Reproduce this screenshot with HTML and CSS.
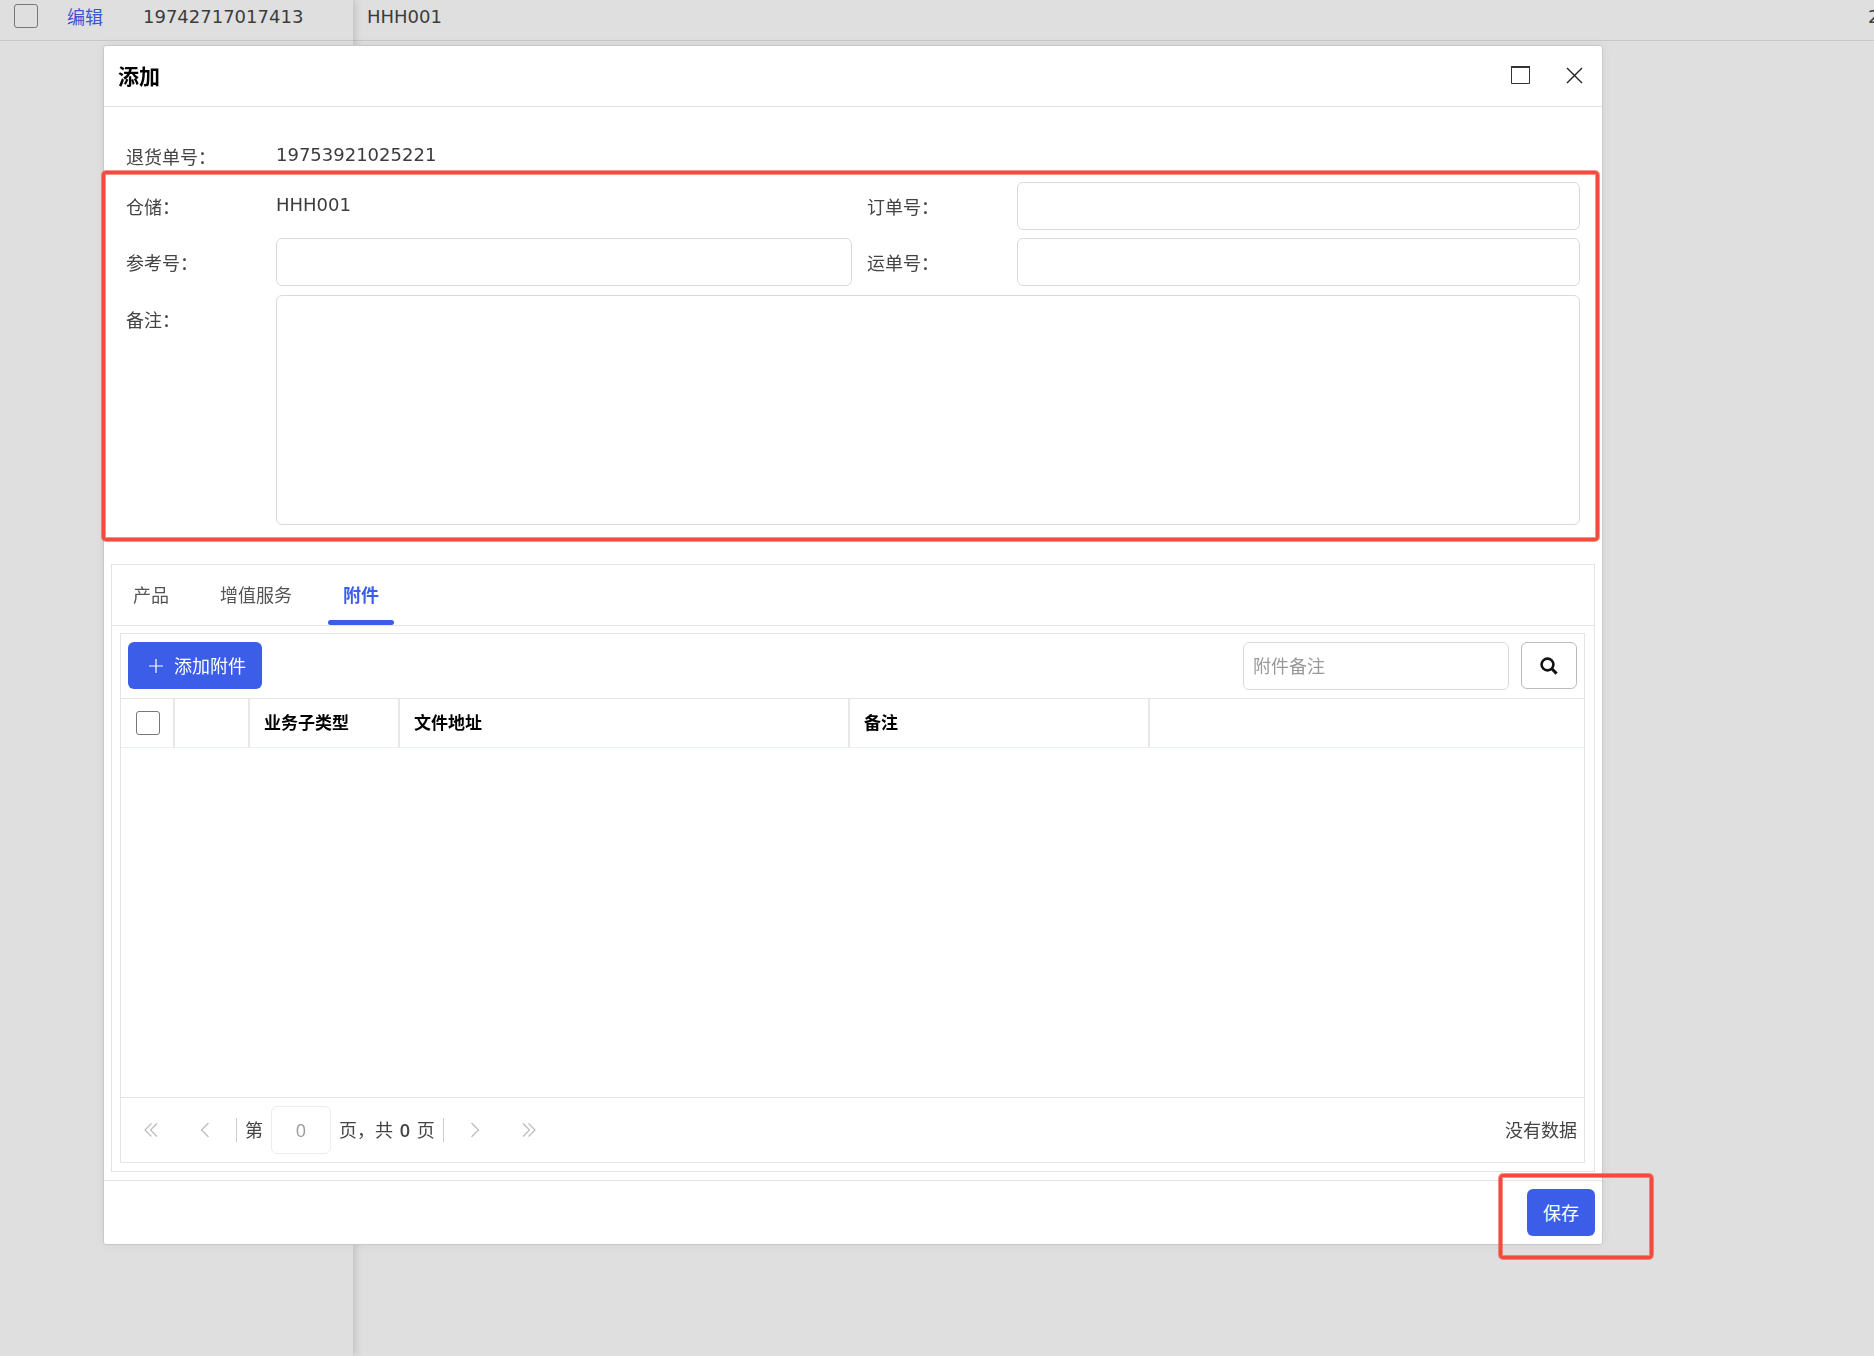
FILE: index.html
```html
<!DOCTYPE html>
<html lang="zh-CN">
<head>
<meta charset="utf-8">
<meta name="viewport" content="width=device-width, initial-scale=1">
<title>添加</title>
<link rel="stylesheet" href="styles.css">
</head>
<body>
<div class="page">
  <div class="pane pane-frozen">
    <div class="list-row">
      <input class="check" type="checkbox" aria-label="选择行">
      <a class="edit-link" href="#">编辑</a>
      <span class="code">19742717017413</span>
    </div>
  </div>
  <div class="pane pane-scroll">
    <div class="list-row">
      <span class="code cell-storage">HHH001</span>
      <span class="code cell-date">2</span>
    </div>
  </div>
</div>

<div class="overlay">
  <section class="dialog" role="dialog" aria-labelledby="dialog-title">
    <header class="dialog-head">
      <h1 class="dialog-title" id="dialog-title">添加</h1>
      <div class="dialog-tools">
        <button class="icon-btn" type="button" aria-label="最大化">
          <svg width="19" height="18" viewBox="0 0 19 18" fill="none" stroke="#333"><path d="M0 1H19" stroke-width="2"/><path d="M0.500 1V17.500H18.500V1" stroke-width="1"/></svg>
        </button>
        <button class="icon-btn" type="button" aria-label="关闭">
          <svg width="17" height="17" viewBox="0 0 17 17" fill="none" stroke="#222" stroke-width="1.4"><path d="M1 1L16 16M16 1L1 16"/></svg>
        </button>
      </div>
    </header>

    <div class="dialog-body">
      <form class="form">
        <div class="form-row form-row-first">
          <span class="label">退货单号：</span>
          <span class="code value">19753921025221</span>
        </div>
        <div class="form-marked">
          <span class="label">仓储：</span>
          <span class="code value">HHH001</span>
          <label class="label label-second" for="order-no">订单号：</label>
          <input class="field" id="order-no" type="text">
          <label class="label" for="ref-no">参考号：</label>
          <input class="field" id="ref-no" type="text">
          <label class="label label-second" for="track-no">运单号：</label>
          <input class="field" id="track-no" type="text">
          <label class="label label-top" for="remark">备注：</label>
          <textarea class="field field-area" id="remark"></textarea>
          <div class="mark mark-form"></div>
        </div>
      </form>

      <div class="tabs">
        <div class="tab-bar" role="tablist">
          <button class="tab" type="button" role="tab">产品</button>
          <button class="tab" type="button" role="tab">增值服务</button>
          <button class="tab tab-active" type="button" role="tab" aria-selected="true">附件</button>
        </div>
        <div class="grid">
          <div class="toolbar">
            <button class="btn btn-add" type="button">
              <svg width="14" height="14" viewBox="0 0 14 14" stroke="#fff" stroke-width="1.2"><path d="M7 0V14M0 7H14"/></svg>
              添加附件
            </button>
            <div class="search">
              <input class="field search-field" type="text" placeholder="附件备注" aria-label="附件备注">
              <button class="search-btn" type="button" aria-label="搜索">
                <svg width="18" height="18" viewBox="0 0 18 18" fill="none" stroke="#111"><circle cx="7.5" cy="7.5" r="5.9" stroke-width="2.6"/><path d="M11.8 11.8L16.6 16.6" stroke-width="3"/></svg>
              </button>
            </div>
          </div>
          <div class="grid-body">
            <table class="table">
              <colgroup><col class="c-check"><col class="c-tool"><col class="c-type"><col class="c-file"><col class="c-remark"><col></colgroup>
              <thead>
                <tr>
                  <th class="th-check"><input class="check" type="checkbox" aria-label="全选"></th>
                  <th></th>
                  <th>业务子类型</th>
                  <th>文件地址</th>
                  <th>备注</th>
                  <th></th>
                </tr>
              </thead>
            </table>
          </div>
          <div class="pager">
            <div class="pager-nav">
              <button class="page-btn" type="button" aria-label="首页"><svg width="14" height="16" viewBox="0 0 14 16"><path d="M7.500 1.500L1 8L7.500 14.500M13 1.500L6.500 8L13 14.500"/></svg></button>
              <button class="page-btn" type="button" aria-label="上一页"><svg width="14" height="16" viewBox="0 0 14 16"><path d="M10.500 1L3.500 8L10.500 15"/></svg></button>
              <span class="sep"></span>
              <label for="page-no">第</label>
              <input class="field page-field" id="page-no" type="text" value="0">
              <span>页，共 <span class="total">0</span> 页</span>
              <span class="sep"></span>
              <button class="page-btn" type="button" aria-label="下一页"><svg width="14" height="16" viewBox="0 0 14 16"><path d="M3.500 1L10.500 8L3.500 15"/></svg></button>
              <button class="page-btn" type="button" aria-label="末页"><svg width="14" height="16" viewBox="0 0 14 16"><path d="M1 1.500L7.500 8L1 14.500M6.500 1.500L13 8L6.500 14.500"/></svg></button>
            </div>
            <span>没有数据</span>
          </div>
        </div>
      </div>
    </div>

    <footer class="dialog-foot">
      <button class="btn" type="button">保存</button>
      <div class="mark mark-save"></div>
    </footer>
  </section>
</div>
</body>
</html>
```

FILE: styles.css
```css
* { box-sizing: border-box; }

body {
  margin: 0;
  height: 100vh;
  overflow: hidden;
  background: #dfdfdf;
  color: #444;
  font: 18px/24px "Open Sans", "Noto Sans CJK SC", sans-serif;
}

button, input, textarea { font: inherit; margin: 0; }
button { padding: 0; border: 0; background: none; color: inherit; cursor: pointer; }
svg { display: block; flex: none; }

.code {
  font-family: "DejaVu Sans", sans-serif;
  color: #3c3c3c;
}

.check {
  appearance: none;
  display: block;
  width: 24px;
  height: 24px;
  border: 1px solid #777;
  border-radius: 3px;
}

/* Order list behind the dialog */
.page { display: flex; height: 100%; }
.pane-frozen {
  width: 353px;
  flex: none;
  z-index: 1;
  box-shadow: 2px 0 8px rgba(0, 0, 0, 0.15);
  background: #dfdfdf;
}
.pane-scroll { flex: 1; min-width: 0; }
.list-row {
  display: flex;
  align-items: center;
  height: 41px;
  padding: 0 0 6px 14px;
  border-bottom: 1px solid #c8c8c8;
}
.list-row .check { margin-bottom: 2px; }
.edit-link {
  width: 76px;
  margin-left: 29px;
  color: #3a56d0;
  text-decoration: none;
}
.cell-storage { flex: 1; }
.cell-date { width: 6px; white-space: nowrap; }

/* Dialog */
.overlay {
  position: fixed;
  inset: 0;
  z-index: 2;
  display: flex;
  padding: 45px 271px 111px 103px;
}
.dialog {
  flex: 1;
  min-width: 0;
  display: flex;
  flex-direction: column;
  background: #fff;
  border: 1px solid #c8c8c8;
  border-radius: 3px;
  box-shadow: 0 0 12px rgba(0, 0, 0, 0.05);
}
.dialog-head {
  display: flex;
  justify-content: space-between;
  align-items: center;
  height: 61px;
  padding: 0 19px 0 14px;
  border-bottom: 1px solid #e2e2e2;
}
.dialog-title { margin: 0; font-size: 21px; line-height: 30px; color: #000; }
.dialog-tools { display: flex; gap: 36px; padding-bottom: 2px; }
.icon-btn { display: flex; align-items: center; height: 20px; }

.dialog-body {
  flex: 1;
  min-height: 0;
  display: flex;
  flex-direction: column;
  padding: 29px 7px 8px;
}

/* Form */
.form { padding: 0 15px; }
.form-row, .form-marked {
  display: grid;
  grid-template-columns: 150px 576fr 165px 563fr;
  row-gap: 8px;
}
.form-row-first { height: 40px; margin-bottom: 6px; align-items: center; }
.form-marked { position: relative; grid-template-rows: 48px 48px 231px; align-items: center; }
.label { padding-top: 2px; }
.value { padding-bottom: 2px; }
.label-second { padding-left: 15px; }
.label-top { align-self: start; padding-top: 14px; }
.field {
  width: 100%;
  height: 48px;
  padding: 0 9px;
  border: 1px solid #dadada;
  border-radius: 6px;
  background: #fff;
  color: #444;
  outline: 0;
}
.field-area { display: block; grid-column: 2 / -1; height: 230px; align-self: end; resize: none; }

/* Tabs */
.tabs {
  flex: 1;
  min-height: 0;
  display: flex;
  flex-direction: column;
  margin-top: 39px;
  border: 1px solid #e4e4e4;
}
.tab-bar {
  display: flex;
  gap: 21px;
  height: 61px;
  padding-left: 6px;
  border-bottom: 1px solid #e4e4e4;
}
.tab { padding: 5px 15px 0; border-bottom: 5px solid transparent; color: #555; }
.tab-active {
  position: relative;
  color: #3c5de8;
  font-weight: 700;
}
.tab-active::after {
  content: "";
  position: absolute;
  left: 0;
  right: 0;
  bottom: -5px;
  height: 5px;
  border-radius: 3px;
  background: #3c5de8;
}

/* Attachment grid */
.grid {
  flex: 1;
  min-height: 0;
  display: flex;
  flex-direction: column;
  margin: 7px 9px 8px 8px;
  border: 1px solid #e4e4e4;
}
.toolbar {
  display: flex;
  justify-content: space-between;
  height: 65px;
  padding: 8px 7px;
  border-bottom: 1px solid #e4e4e4;
}
.btn {
  display: flex;
  align-items: center;
  height: 47px;
  padding: 0 16px;
  border-radius: 6px;
  background: #3c5de8;
  color: #fff;
}
.btn-add { gap: 11px; padding: 0 16px 0 21px; }
.search { display: flex; gap: 12px; }
.search-field { width: 266px; }
.search-field::placeholder { color: #999; opacity: 1; }
.search-btn {
  display: flex;
  align-items: center;
  justify-content: center;
  width: 56px;
  height: 47px;
  border: 1px solid #bbbbc0;
  border-radius: 6px;
}

.grid-body { flex: 1; min-height: 0; }
.table { width: 100%; table-layout: fixed; border-collapse: separate; border-spacing: 0; }
.c-check { width: 54px; }
.c-tool { width: 75px; }
.c-type { width: 150px; }
.c-file { width: 450px; }
.c-remark { width: 300px; }
.table th {
  height: 49px;
  padding: 0 14px;
  border-right: 2px solid #e8e8e8;
  border-bottom: 1px solid #e8eff5;
  color: #000;
  font-size: 17px;
  text-align: left;
}
.table .th-check { padding-left: 15px; }
.table th:last-child { border-right: 0; }

.pager {
  display: flex;
  align-items: center;
  justify-content: space-between;
  height: 65px;
  padding: 0 7px;
  border-top: 1px solid #e4e4e4;
}
.pager-nav { display: flex; align-items: center; gap: 8px; }
.page-btn { display: flex; align-items: center; justify-content: center; width: 46px; height: 40px; }
.page-btn svg { fill: none; stroke: #bbb; stroke-width: 1.2; }
.sep { width: 1px; height: 24px; background: #ccc; }
.page-field { width: 60px; border-color: #ececec; color: #999; text-align: center; }
.total { margin: 0 2px; font-weight: 600; }

.dialog-foot {
  position: relative;
  display: flex;
  justify-content: flex-end;
  height: 64px;
  padding: 8px 7px;
  border-top: 1px solid #e2e2e2;
}

/* Red highlight frames */
.mark {
  position: absolute;
  border: 3px solid #f24a3d;
  border-radius: 4px;
  box-shadow: 0 0 0 1px rgba(242, 74, 61, 0.6), inset 0 0 0 1px rgba(242, 74, 61, 0.6);
  pointer-events: none;
}
.mark-form { inset: -11px -19px -16px -24px; }
.mark-save { top: -7px; right: -51px; width: 154px; height: 85px; }
```
